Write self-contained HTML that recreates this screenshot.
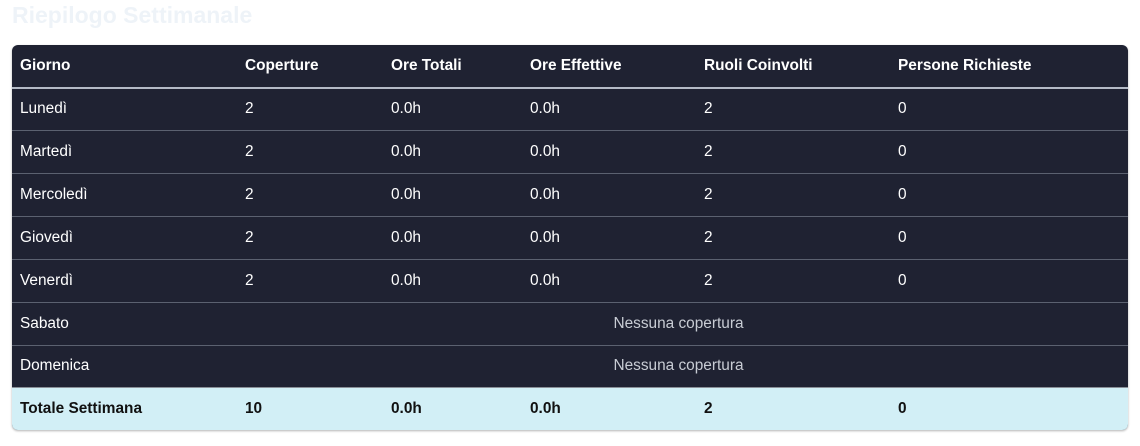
<!DOCTYPE html>
<html><head><style>
body{margin:0;background:#fff;font-family:"Liberation Sans",Arial,sans-serif;width:1140px;height:446px;overflow:hidden}
h2{position:absolute;left:12px;top:2px;margin:0;font-size:23px;font-weight:bold;color:#eef3f8}
.t{position:absolute;left:12px;top:45px;width:1116px;border-radius:6px;overflow:hidden;box-shadow:0 1px 2px rgba(0,0,0,.3)}
table{border-collapse:collapse;width:100%;font-size:15.4px;color:#fff;background:#1f2232}
td,th{height:41.85px;padding:0 8px;text-align:left;border-top:1px solid #5b6170}
th{font-weight:bold;border-top:none;border-bottom:2px solid #b4bac6;height:41.5px}
td.n{text-align:center;color:#c8ccd4;padding-left:0}
tr.tot td{background:#d2eff6;color:#111;font-weight:bold;border-top:1px solid #8a9098;height:41.85px}
</style></head><body>
<h2>Riepilogo Settimanale</h2>
<div class="t"><table>
<colgroup><col style="width:225px"><col style="width:146px"><col style="width:139px"><col style="width:174px"><col style="width:194px"><col></colgroup>
<tr><th>Giorno</th><th>Coperture</th><th>Ore Totali</th><th>Ore Effettive</th><th>Ruoli Coinvolti</th><th>Persone Richieste</th></tr>
<tr><td>Lunedì</td><td>2</td><td>0.0h</td><td>0.0h</td><td>2</td><td>0</td></tr>
<tr><td>Martedì</td><td>2</td><td>0.0h</td><td>0.0h</td><td>2</td><td>0</td></tr>
<tr><td>Mercoledì</td><td>2</td><td>0.0h</td><td>0.0h</td><td>2</td><td>0</td></tr>
<tr><td>Giovedì</td><td>2</td><td>0.0h</td><td>0.0h</td><td>2</td><td>0</td></tr>
<tr><td>Venerdì</td><td>2</td><td>0.0h</td><td>0.0h</td><td>2</td><td>0</td></tr>
<tr><td>Sabato</td><td colspan="5" class="n">Nessuna copertura</td></tr>
<tr><td>Domenica</td><td colspan="5" class="n">Nessuna copertura</td></tr>
<tr class="tot"><td>Totale Settimana</td><td>10</td><td>0.0h</td><td>0.0h</td><td>2</td><td>0</td></tr>
</table></div>
</body></html>
